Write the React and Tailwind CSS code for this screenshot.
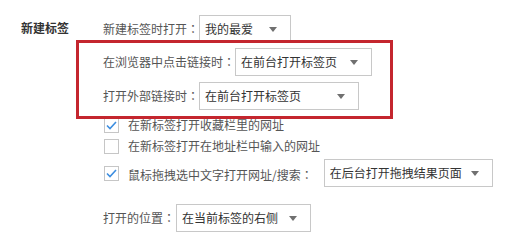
import React from "react";

const font = { fontFamily: '"Noto Sans CJK SC", "Noto Sans", sans-serif' };

const Arrow = () => (
  <svg width="8" height="5" viewBox="0 0 8 5" className="shrink-0">
    <path d="M0 0 L8 0 L4 5 Z" fill="#707070" />
  </svg>
);

const Select = ({ value, width }) => (
  <div
    className={`flex h-[28px] shrink-0 items-center justify-between border border-[#c8c8c8] bg-white pl-[5px] pr-[13px] text-[12px] text-[#333] ${width}`}
  >
    <span className="whitespace-nowrap">{value}</span>
    <Arrow />
  </div>
);

const Checkbox = ({ checked }) => (
  <div className="flex h-[15px] w-[15px] shrink-0 items-center justify-center border border-[#c6c6c6] bg-white">
    {checked && (
      <svg width="11" height="9" viewBox="0 0 11 9">
        <path d="M1 4.5 L4 7.5 L10 1" fill="none" stroke="#3d8ee0" strokeWidth="1.6" />
      </svg>
    )}
  </div>
);

// full-width colon with centred glyph, as in the original UI font
const Colon = () => (
  <span className="font-['Noto_Sans_CJK_JP','Noto_Sans_CJK_SC',sans-serif]">：</span>
);

const Label = ({ children, colon }) => (
  <span className="whitespace-nowrap text-[12px] text-[#555]">
    {children}
    {colon && <Colon />}
  </span>
);

export default function App() {
  return (
    <div className="relative h-[241px] w-[513px] overflow-hidden bg-white" style={font}>
      <div className="flex">
        <div className="w-[103px] shrink-0 pl-[21px] pt-[19px] text-[12px] font-bold text-[#333]">
          新建标签
        </div>

        <div className="flex flex-col pt-[15px]">
          <div className="flex items-center">
            <Label colon>新建标签时打开</Label>
            <Select value="我的最爱" width="w-[92px]" />
          </div>

          <div className="mt-[5px] flex items-center">
            <Label colon>在浏览器中点击链接时</Label>
            <Select value="在前台打开标签页" width="w-[137px]" />
          </div>

          <div className="mt-[6px] flex items-center">
            <Label colon>打开外部链接时</Label>
            <Select value="在前台打开标签页" width="w-[160px]" />
          </div>

          <div className="mt-[5px] flex h-[20px] items-center gap-[9px] pl-[1px]">
            <Checkbox checked />
            <Label>在新标签打开收藏栏里的网址</Label>
          </div>

          <div className="flex h-[22px] items-center gap-[9px] pl-[1px]">
            <Checkbox />
            <Label>在新标签打开在地址栏中输入的网址</Label>
          </div>

          <div className="mt-[2px] flex items-center pl-[1px]">
            <Checkbox checked />
            <span className="ml-[9px]">
              <Label colon>鼠标拖拽选中文字打开网址/搜索</Label>
            </span>
            <div className="ml-[11px]">
              <Select value="在后台打开拖拽结果页面" width="w-[169px]" />
            </div>
          </div>

          <div className="mt-[17px] flex items-center">
            <Label colon>打开的位置</Label>
            <div className="ml-[1px]">
              <Select value="在当前标签的右侧" width="w-[135px]" />
            </div>
          </div>
        </div>
      </div>

      {/* red annotation frame */}
      <div className="pointer-events-none absolute left-[76px] top-[40px] h-[79px] w-[317px] border-[3px] border-[#c4262e]" />
    </div>
  );
}
